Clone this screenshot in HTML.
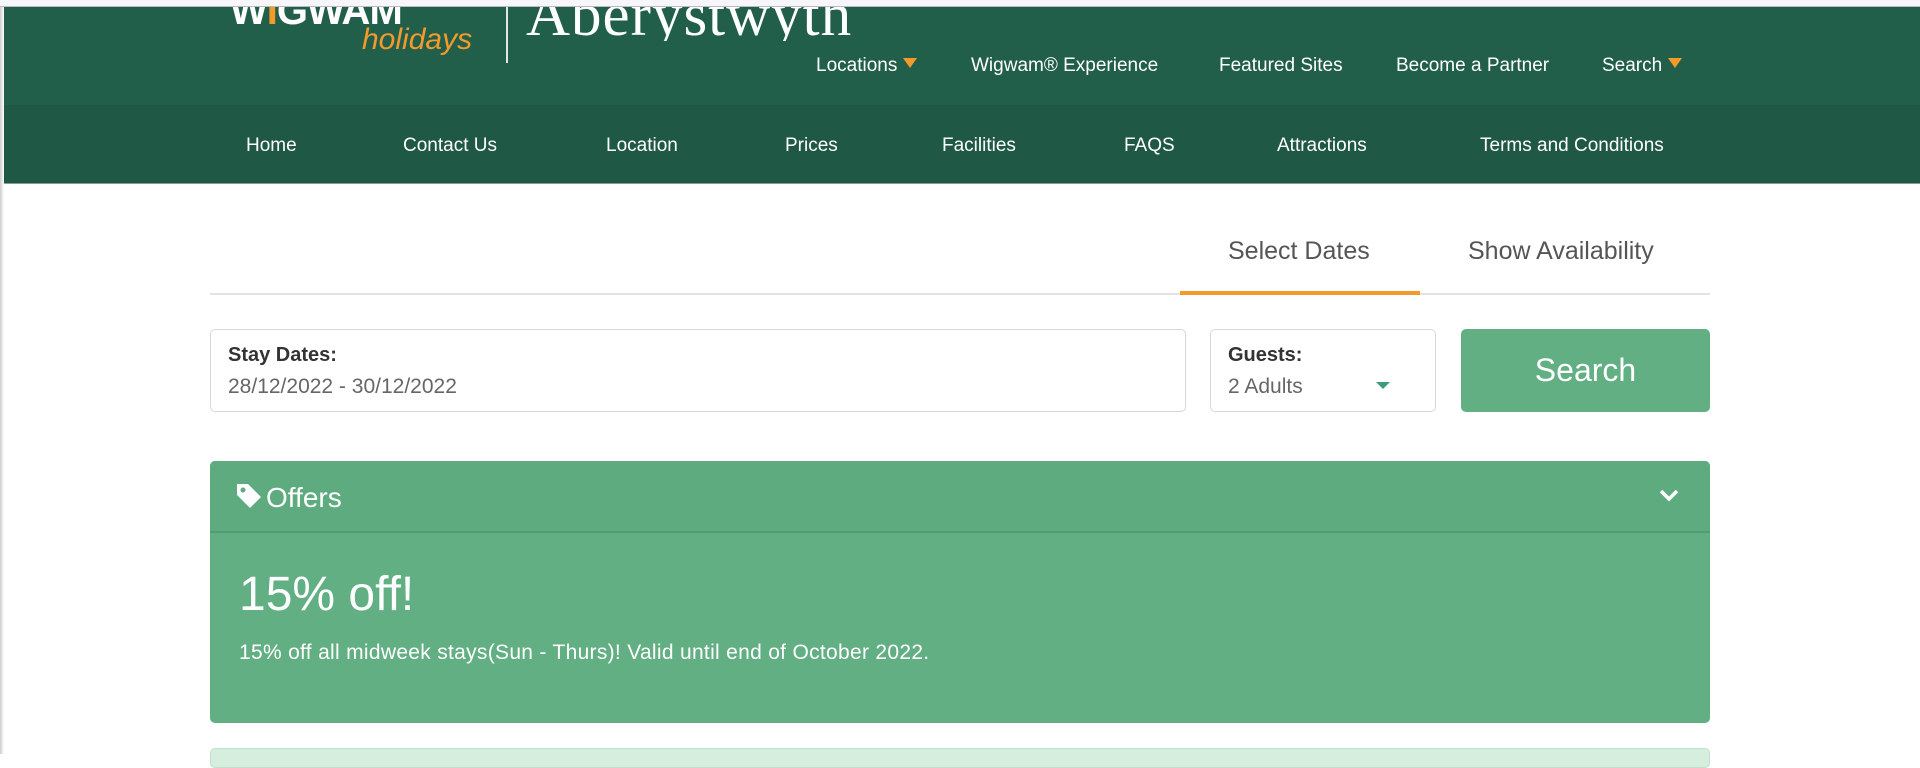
<!DOCTYPE html>
<html><head><meta charset="utf-8"><style>
*{margin:0;padding:0;box-sizing:border-box}
body{width:1920px;height:754px;overflow:hidden;background:#fff;font-family:"Liberation Sans",sans-serif;position:relative}
.abs{position:absolute;white-space:nowrap}
#top{position:absolute;left:0;top:0;width:1920px;height:7px;background:#f7f7f9;border-bottom:1px solid #bbb}
#hdr{position:absolute;left:0;top:7px;width:1920px;height:98px;background:#215f4b}
#nav{position:absolute;left:0;top:105px;width:1920px;height:79px;background:#1f5845;border-bottom:1px solid #8a9c95}
#shadow{position:absolute;left:0;top:7px;width:4px;height:747px;background:linear-gradient(90deg,#ccc,#fff)}
.tn{color:#fff;font-size:19px;top:55px}
.nv{color:#fff;font-size:19px;top:135px}
.tri{display:inline-block;width:0;height:0;border-left:7px solid transparent;border-right:7px solid transparent;border-top:10px solid #f39a2b;margin-left:6px;vertical-align:3px}
.box{position:absolute;border:1px solid #d8d8d8;border-radius:5px;background:#fff}
.lbl{font-size:20px;font-weight:bold;color:#333;position:absolute;left:17px;top:14px}
.val{font-size:21px;color:#666;position:absolute;left:17px;top:45px}
</style></head><body>
<div id="top"></div>
<div id="hdr"></div>
<div id="nav"></div>
<div id="shadow"></div>
<div class="abs" style="left:230px;color:#fff;font-size:40px;font-weight:bold;letter-spacing:-1px;height:36px;overflow:hidden;top:7px;line-height:20px"><span style="position:relative;top:-6px">W<span style="color:#f39a2b">I</span>GWAM</span></div>
<div class="abs" style="left:362px;top:23px;color:#f39a2b;font-size:30px;font-style:italic">holidays</div>
<div class="abs" style="left:506px;top:7px;width:2px;height:56px;background:#dfe8e4"></div>
<div class="abs" style="left:526px;top:7px;height:34px;overflow:hidden;color:#fff;font-family:'Liberation Serif',serif;font-size:61px;line-height:30px;letter-spacing:1px"><span style="position:relative;top:-6px">Aberystwyth</span></div>
<div class="abs tn" style="left:816px">Locations<span class="tri"></span></div>
<div class="abs tn" style="left:971px">Wigwam® Experience</div>
<div class="abs tn" style="left:1219px">Featured Sites</div>
<div class="abs tn" style="left:1396px">Become a Partner</div>
<div class="abs tn" style="left:1602px">Search<span class="tri"></span></div>
<div class="abs nv" style="left:246px">Home</div>
<div class="abs nv" style="left:403px">Contact Us</div>
<div class="abs nv" style="left:606px">Location</div>
<div class="abs nv" style="left:785px">Prices</div>
<div class="abs nv" style="left:942px">Facilities</div>
<div class="abs nv" style="left:1124px">FAQS</div>
<div class="abs nv" style="left:1277px">Attractions</div>
<div class="abs nv" style="left:1480px">Terms and Conditions</div>
<div class="abs" style="left:1228px;top:237px;font-size:25px;color:#555">Select Dates</div>
<div class="abs" style="left:1468px;top:237px;font-size:25px;color:#555">Show Availability</div>
<div class="abs" style="left:210px;top:293px;width:1500px;height:2px;background:#e3e3e3"></div>
<div class="abs" style="left:1180px;top:291px;width:240px;height:4px;background:#f39a2b"></div>
<div class="box" style="left:210px;top:329px;width:976px;height:83px"><div class="lbl">Stay Dates:</div><div class="val">28/12/2022 - 30/12/2022</div></div>
<div class="box" style="left:1210px;top:329px;width:226px;height:83px"><div class="lbl">Guests:</div><div class="val">2 Adults</div><div style="position:absolute;left:165px;top:52px;width:0;height:0;border-left:7px solid transparent;border-right:7px solid transparent;border-top:7px solid #3f9c7a"></div></div>
<div class="abs" style="left:1461px;top:329px;width:249px;height:83px;background:#62af84;border-radius:5px;color:#fff;font-size:32px;text-align:center;line-height:83px">Search</div>
<div class="abs" style="left:210px;top:461px;width:1500px;height:262px;background:#62af84;border-radius:5px;overflow:hidden">
 <div style="height:72px;background:#5dab7f;border-bottom:2px solid #519a72;position:relative">
  <svg style="position:absolute;left:25px;top:21px" width="28" height="28" viewBox="0 0 28 28"><path d="M2 2h11l13 13-11 11L2 13z" fill="#fff"/><circle cx="8" cy="8" r="2.5" fill="#5dab7f"/></svg>
  <div style="position:absolute;left:56px;top:21px;color:#fff;font-size:28px">Offers</div>
  <svg style="position:absolute;right:30px;top:27px" width="22" height="16" viewBox="0 0 22 16"><path d="M3 3l8 8 8-8" stroke="#fff" stroke-width="3.5" fill="none"/></svg>
 </div>
 <div style="position:absolute;left:29px;top:106px;color:#fff;font-size:48px">15% off!</div>
 <div style="position:absolute;left:29px;top:180px;color:#fff;font-size:21px;letter-spacing:0.3px">15% off all midweek stays(Sun - Thurs)! Valid until end of October 2022.</div>
</div>
<div class="abs" style="left:210px;top:748px;width:1500px;height:20px;background:#d5eedd;border:1px solid #bfe0ca;border-radius:5px"></div>
</body></html>
